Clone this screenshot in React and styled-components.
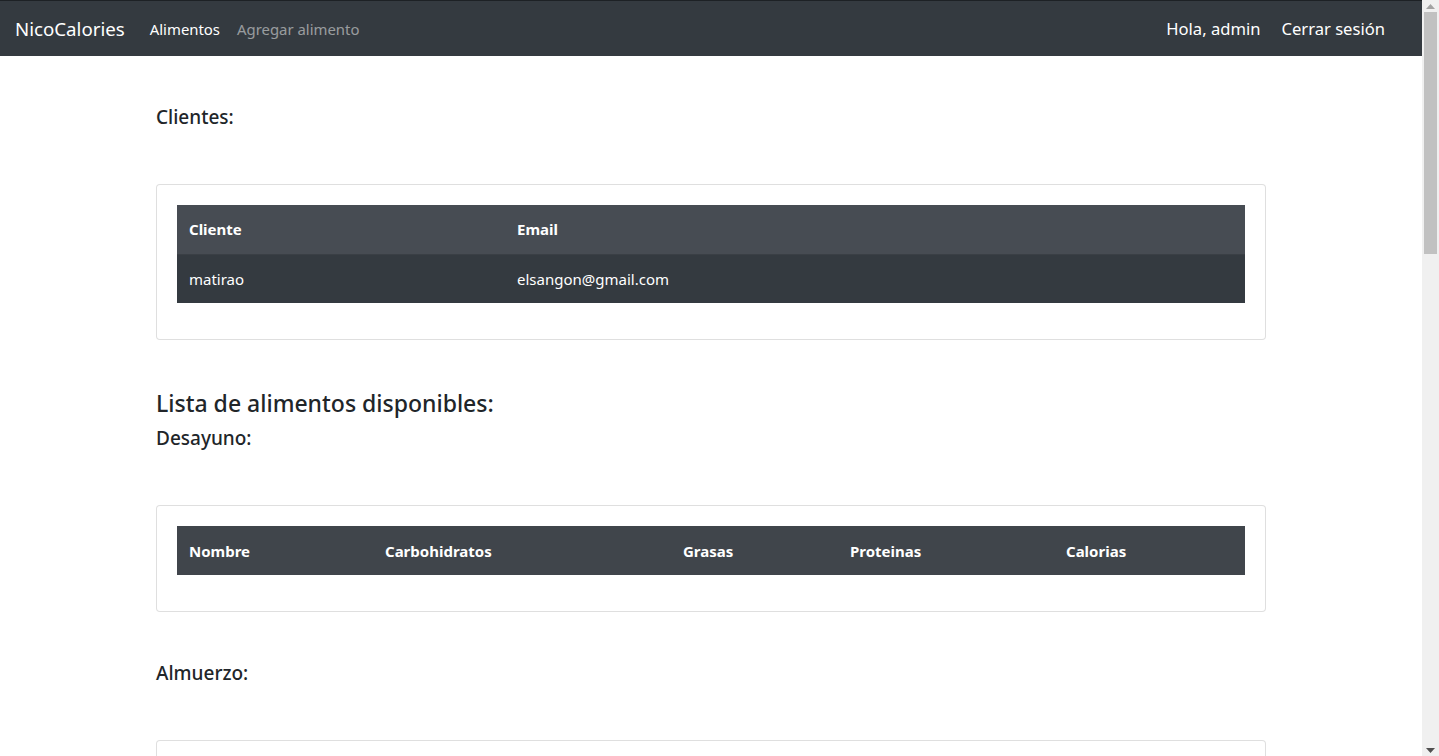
import React from "react"
import styled, { createGlobalStyle } from "styled-components"

const GlobalStyle = createGlobalStyle`
    html, body {
        margin: 0;
        padding: 0;
        overflow: hidden;
    }
    body {
        font-family: "Noto Sans", "Open Sans", Arial, sans-serif;
        color: #212529;
        background: #fff;
    }
    * {
        box-sizing: border-box;
    }
`

const Window = styled.div`
    display: flex;
    width: 100vw;
    height: 100vh;
    overflow: hidden;
`

const Page = styled.div`
    flex: 1;
    min-width: 0;
    height: 100%;
    overflow: hidden;
`

const ScrollTrack = styled.div`
    width: 17px;
    flex: none;
    height: 100%;
    background: #f0f0f0;
    display: flex;
    flex-direction: column;
    align-items: center;
`

const ScrollArrow = styled.div`
    width: 17px;
    height: 12px;
    display: flex;
    justify-content: center;
    align-items: center;
    flex: none;
`

const ScrollThumb = styled.div`
    width: 13px;
    height: 242px;
    background: #c1c1c1;
`

const ScrollSpacer = styled.div`
    flex: 1;
`

const Navbar = styled.nav`
    height: 56px;
    background: #343a40;
    border-top: 1px solid #1d2125;
    display: flex;
    align-items: center;
    padding: 0 37px 0 15px;
`

const Brand = styled.a`
    font-size: 18.7px;
    color: #fff;
    margin-right: 25px;
    text-decoration: none;
`

const NavLinks = styled.div`
    display: flex;
    gap: 17px;
    flex: 1;
`

const NavLink = styled.a`
    font-size: 14.9px;
    color: ${props => props.active ? "#fff" : "rgba(255,255,255,.5)"};
    text-decoration: none;
`

const NavRight = styled.div`
    display: flex;
    gap: 21px;
`

const NavRightItem = styled.span`
    font-size: 16.6px;
    color: #fff;
`

const Container = styled.main`
    width: 1110px;
    margin: 0 auto;
    padding-top: 49px;
`

const SectionTitle = styled.h5`
    margin: 0;
    font-size: 19px;
    font-weight: 500;
    line-height: 24px;
`

const ListTitle = styled.h4`
    margin: 49px 0 8px 0;
    font-size: 23px;
    font-weight: 500;
    line-height: 29px;
`

const MealTitle = styled.h5`
    margin: ${props => props.top || "0"} 0 0 0;
    font-size: 19px;
    font-weight: 500;
    line-height: 24px;
`

const Card = styled.div`
    margin-top: 55px;
    border: 1px solid rgba(0,0,0,.125);
    border-radius: 4px;
    padding: 20px 20px 36px 20px;
    background: #fff;
`

const Table = styled.table`
    width: 100%;
    border-collapse: collapse;
    color: #fff;
    background: #343a40;
`

const HeadCell = styled.th`
    text-align: left;
    font-weight: 700;
    font-size: 15px;
    height: 49px;
    padding: 0 12px;
    background: ${props => props.bg || "#40454b"};
    border-bottom: ${props => props.bg ? "1px solid #3a3f45" : "none"};
    width: ${props => props.width || "auto"};
`

const Cell = styled.td`
    font-size: 15px;
    height: 49px;
    padding: 0 12px;
`

const foodColumns = [
    { label: "Nombre", width: "196px" },
    { label: "Carbohidratos", width: "298px" },
    { label: "Grasas", width: "167px" },
    { label: "Proteinas", width: "216px" },
    { label: "Calorias", width: "auto" }
]

function FoodTable() {
    return (
        <Card>
            <Table>
                <thead>
                    <tr>
                        {foodColumns.map(col => (
                            <HeadCell key={col.label} width={col.width}>{col.label}</HeadCell>
                        ))}
                    </tr>
                </thead>
            </Table>
        </Card>
    )
}

function App() {
    return (
        <Window>
            <GlobalStyle />
            <Page>
                <Navbar>
                    <Brand href="#">NicoCalories</Brand>
                    <NavLinks>
                        <NavLink href="#" active>Alimentos</NavLink>
                        <NavLink href="#">Agregar alimento</NavLink>
                    </NavLinks>
                    <NavRight>
                        <NavRightItem>Hola, admin</NavRightItem>
                        <NavRightItem>Cerrar sesión</NavRightItem>
                    </NavRight>
                </Navbar>
                <Container>
                    <SectionTitle>Clientes:</SectionTitle>
                    <Card>
                        <Table>
                            <thead>
                                <tr>
                                    <HeadCell bg="#474c53" width="328px">Cliente</HeadCell>
                                    <HeadCell bg="#474c53">Email</HeadCell>
                                </tr>
                            </thead>
                            <tbody>
                                <tr>
                                    <Cell>matirao</Cell>
                                    <Cell>elsangon@gmail.com</Cell>
                                </tr>
                            </tbody>
                        </Table>
                    </Card>
                    <ListTitle>Lista de alimentos disponibles:</ListTitle>
                    <MealTitle>Desayuno:</MealTitle>
                    <FoodTable />
                    <MealTitle top="49px">Almuerzo:</MealTitle>
                    <FoodTable />
                </Container>
            </Page>
            <ScrollTrack>
                <ScrollArrow>
                    <svg width="9" height="5" viewBox="0 0 9 5"><path d="M0 5 L4.5 0 L9 5 Z" fill="#a3a3a3" /></svg>
                </ScrollArrow>
                <ScrollThumb />
                <ScrollSpacer />
                <ScrollArrow>
                    <svg width="9" height="5" viewBox="0 0 9 5"><path d="M0 0 L4.5 5 L9 0 Z" fill="#505050" /></svg>
                </ScrollArrow>
            </ScrollTrack>
        </Window>
    )
}

export default App
